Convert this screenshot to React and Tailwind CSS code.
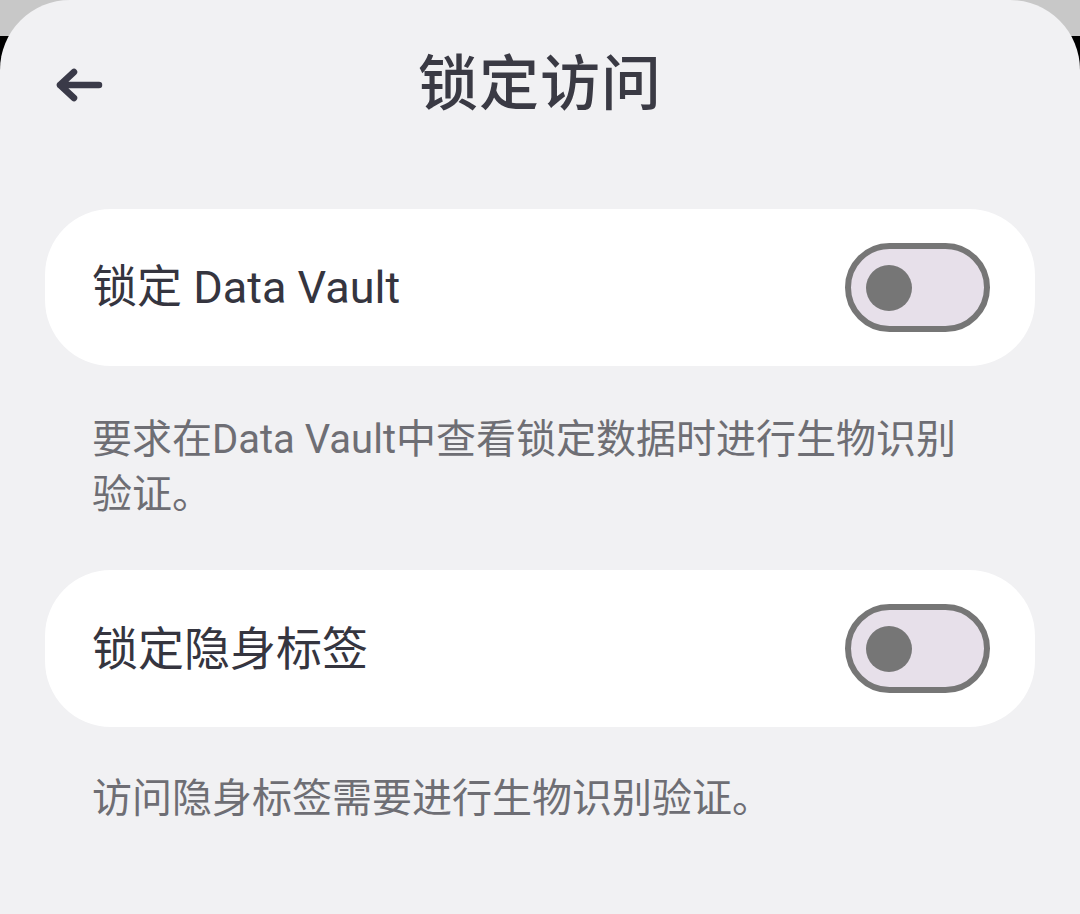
export default function App() {
  const font = { fontFamily: 'Roboto, "Noto Sans CJK SC", "Noto Sans", sans-serif' };
  const Toggle = () => (
    <div className="w-[145px] h-[89px] rounded-full border-[6px] border-[#767676] bg-[#e7e0ea] flex items-center pl-[15px] shrink-0">
      <div className="w-[46px] h-[46px] rounded-full bg-[#767676]" />
    </div>
  );
  return (
    <div
      className="w-[1080px] h-[914px] bg-[linear-gradient(#c8c8c8_36px,#000_36px)] overflow-hidden"
      style={font}
    >
      <div className="h-full bg-[#f1f1f3] rounded-t-[70px] flex flex-col">
        <div className="h-[170px] grid grid-cols-[1fr_auto_1fr] items-center">
          <div className="pl-[54px]">
            <svg width="50" height="40" viewBox="0 0 50 40" fill="none">
              <path
                d="M6 20 H45 M6 20 L20 7 M6 20 L20 33"
                stroke="#3a3a48"
                strokeWidth="6.5"
                strokeLinecap="round"
                strokeLinejoin="round"
              />
            </svg>
          </div>
          <div className="text-[60px] leading-none font-medium text-[#3a3a44] tracking-[1px]">锁定访问</div>
          <div />
        </div>
        <div className="px-[45px] flex flex-col">
          <div className="mt-[39px] h-[157px] bg-white rounded-[66px] flex items-center justify-between pl-[47px] pr-[45px]">
            <span className="text-[45px] text-[#35353f] leading-none">锁定 Data Vault</span>
            <Toggle />
          </div>
          <p className="mt-[46px] pl-[47px] pr-[60px] text-[40px] leading-[55px] text-[#6e6e74]">
            要求在Data Vault中查看锁定数据时进行生物识别验证。
          </p>
          <div className="mt-[48px] h-[157px] bg-white rounded-[66px] flex items-center justify-between pl-[47px] pr-[45px]">
            <span className="text-[46px] text-[#35353f] leading-none">锁定隐身标签</span>
            <Toggle />
          </div>
          <p className="mt-[44px] pl-[47px] pr-[60px] text-[40px] leading-[55px] text-[#6e6e74]">
            访问隐身标签需要进行生物识别验证。
          </p>
        </div>
      </div>
    </div>
  );
}
